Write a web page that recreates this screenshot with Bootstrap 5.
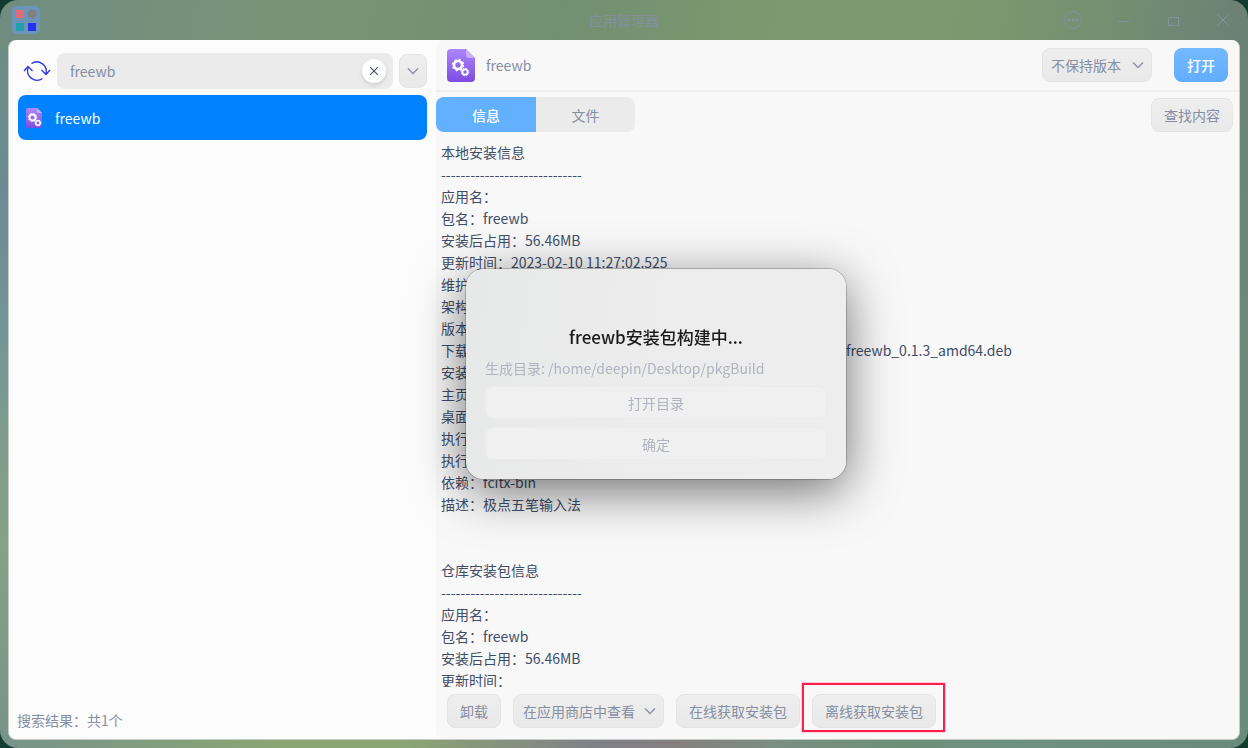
<!DOCTYPE html>
<html lang="zh-CN">
<head>
<meta charset="utf-8">
<meta name="viewport" content="width=device-width, initial-scale=1">
<title>应用管理器</title>
<link href="https://cdn.jsdelivr.net/npm/bootstrap@5.3.0/dist/css/bootstrap.min.css" rel="stylesheet">
<style>
  body { font-family: "Noto Sans CJK SC", sans-serif; font-size: 14px; line-height: 22px; color: #414d68; background: #123c30; }
  .app-window { border-radius: 18px; padding: 0 8px 8px;
    background:
      linear-gradient(100deg, #6f8c80 0%, #77927a 17%, #789373 28%, #718f72 45%, #7b9a6e 62%, #7c9a6f 76%, #748f71 88%, #6b8075 100%) top / 100% 50px no-repeat,
      linear-gradient(90deg, #77938a 0%, #8ba672 23%, #8ba672 32%, #808088 48%, #857f80 54%, #7a8f80 62%, #6d8f78 72%, #6e9080 82%, #6a8a7e 100%) bottom / 100% 16px no-repeat,
      linear-gradient(180deg, #6f8c80 0%, #6b8b94 25%, #72929a 40%, #839f88 66%, #84a284 73%, #77938a 100%) left / 20px 100% no-repeat,
      linear-gradient(180deg, #6b8075 0%, #6c8a79 50%, #6a8a7e 100%) right / 20px 100% no-repeat; }
  .title-bar { height: 40px; color: #878e9f; }
  .title-side { width: 180px; }
  .win-btn { background: none; border: 0; padding: 0; width: 26px; height: 26px; color: #8590a0; line-height: 0; }
  .panes { border-radius: 8px; background: #fcfcfc; border: 1px solid #c3cdc6; border-top: 0; overflow: hidden; }
  .list-pane { width: 427px; padding: 13px 9px 8px 8px; }
  .detail-pane { background: #f8f8f8; border-radius: 8px; }
  .soft { color: #868ea2; }
  .refresh-btn { width: 40px; height: 36px; background: none; border: 0; padding: 0; line-height: 0; }
  .search-box { height: 36px; border-radius: 8px; background: #ebebeb; padding-right: 7px; margin-right: 6px; }
  .search-box input { background: none; border: 0; outline: 0; color: #868ea2; padding: 0 13px; min-width: 0; }
  .clear-btn { width: 24px; height: 24px; border: 0; border-radius: 50%; background: #fff; padding: 0; line-height: 0; box-shadow: 0 2px 4px rgba(0,0,0,.12); }
  .tool-btn { height: 34px; padding: 0 12px; border-radius: 8px; border: 1px solid #e4e4e4; background: linear-gradient(#eeeeee, #e9e9e9); color: #868ea2; font: inherit; white-space: nowrap; }
  .drop-btn { width: 28px; padding: 0; line-height: 0; }
  .result-item { height: 45px; border-radius: 8px; background: #0081ff; color: #fff; text-decoration: none; padding: 0 8px; margin: 6px 0 0 1px; gap: 13px; }
  .detail-head { height: 52px; border-bottom: 2px solid #efefef; padding: 0 11px; }
  .app-name { margin-left: 11px; }
  .open-btn { width: 54px; height: 34px; border: 0; border-radius: 8px; color: #fff; background: linear-gradient(#73b9ff, #61adff); font: inherit; font-weight: 500; margin-left: 22px; }
  .version-field, .store-field { position: relative; }
  .tool-select { appearance: none; padding: 0 26px 0 9px; }
  .version-field select { width: 110px; padding-left: 8px; }
  .store-field select { width: 151px; }
  .version-field svg, .store-field svg { position: absolute; right: 8px; top: 13px; pointer-events: none; }
  .tab-row { padding: 5px 6px 7px 0; }
  .seg { border-radius: 8px; overflow: hidden; background: #ebebeb; }
  .seg button { width: 99px; height: 35px; border: 0; background: none; color: #868ea2; font: inherit; }
  .seg button.on { background: #63b0ff; color: #fff; font-weight: 500; width: 100px; }
  .info-text { height: 548px; overflow: hidden; padding: 2px 5px 0; white-space: pre; }
  .file-tail { margin-left: 377px; }
  .action-bar { padding: 6px 11px 11px; gap: 12px; }
  .marked { position: relative; }
  .marked::after { content: ""; position: absolute; inset: -12px -10px -5px -11px; border: 2px solid #ff1d4d; box-shadow: 0 0 1px #ff1d4d; pointer-events: none; }
  .build-layer { position: fixed; inset: 0 0 0 64px; pointer-events: none; }
  .build-dialog { width: 380px; border-radius: 18px; padding: 56px 19px 19px 19px; pointer-events: auto; color: #1a1a1a;
    background: linear-gradient(100deg, #e7e8e8, #ececec 45%, #eeeeee); box-shadow: 0 0 0 1px rgba(0,0,0,.2), 0 12px 50px rgba(0,0,0,.55); }
  .build-dialog h1 { font-size: 17px; line-height: 24px; font-weight: 500; margin-bottom: 8px; }
  .build-dialog button { height: 33px; border-radius: 8px; border: 1px solid #ececec; background: #f0f0f0; color: #b0b4c0; font: inherit; }
  .build-path { color: #b0b4c0; margin-bottom: 7px; }
</style>
</head>
<body>
<svg width="0" height="0" class="position-absolute" aria-hidden="true">
  <defs>
    <linearGradient id="violet" x2="0" y2="1"><stop stop-color="#ad88fb"/><stop offset="1" stop-color="#7d4be0"/></linearGradient>
    <symbol id="pkg" viewBox="0 0 28 33">
      <path d="M4 0H19L28 9V29a4 4 0 0 1-4 4H4a4 4 0 0 1-4-4V4a4 4 0 0 1 4-4z" fill="url(#violet)"/>
      <path d="M19 0l9 9h-6a3 3 0 0 1-3-3z" fill="#c9affc"/>
      <g fill="none" stroke="#fff">
        <circle cx="11" cy="16" r="4" stroke-width="2.6"/><circle cx="11" cy="16" r="5.6" stroke-width="1.2" stroke-dasharray="2.2 2.2"/>
        <circle cx="18" cy="23" r="2.6" stroke-width="1.8"/><circle cx="18" cy="23" r="3.8" stroke-width="1" stroke-dasharray="1.5 1.5"/>
      </g>
    </symbol>
    <symbol id="pkg-small" viewBox="0 0 16 20">
      <path d="M2 0H11L16 5V18a2 2 0 0 1-2 2H2a2 2 0 0 1-2-2V2a2 2 0 0 1 2-2z" fill="url(#violet)"/>
      <path d="M11 0l5 5h-4a1 1 0 0 1-1-1z" fill="#c9affc"/>
      <g fill="none" stroke="#fff">
        <circle cx="6.500" cy="9.500" r="3" stroke-width="1.800"/><circle cx="6.500" cy="9.500" r="4.200" stroke-width="1" stroke-dasharray="1.600 1.700"/>
        <circle cx="12" cy="15" r="2.200" stroke-width="1.500"/><circle cx="12" cy="15" r="3" stroke-width=".8" stroke-dasharray="1.200 1.200"/>
      </g>
    </symbol>
    <symbol id="chev" viewBox="0 0 12 8"><path d="M1 1.500l5 5 5-5" fill="none" stroke="#8d94a5" stroke-width="1.500"/></symbol>
  </defs>
</svg>
<div class="app-window d-flex flex-column min-vh-100">
  <header class="title-bar d-flex align-items-center justify-content-between">
    <div class="title-side ps-1">
      <svg width="28" height="28" viewBox="0 0 28 28" aria-hidden="true">
        <rect width="28" height="28" rx="5" fill="#6c94b9"/>
        <rect x="4" y="4" width="8" height="8" fill="#dd6e77"/><rect x="4" y="17" width="8" height="8" fill="#1fa0aa"/><rect x="16" y="17" width="8" height="8" fill="#2430ee"/>
        <circle cx="20" cy="8" r="4" fill="#808080"/><circle cx="20" cy="8" r="4.300" fill="none" stroke="#808080" stroke-width="1.400" stroke-dasharray="2.200 2.300"/>
      </svg>
    </div>
    <div>应用管理器</div>
    <div class="title-side d-flex justify-content-end gap-4 pe-1">
      <button class="win-btn flex-shrink-0" aria-label="菜单"><svg width="20" height="20" viewBox="0 0 20 20"><circle cx="10" cy="10" r="8.500" fill="none" stroke="currentColor"/><g fill="currentColor"><circle cx="6" cy="10" r="1.500"/><circle cx="10" cy="10" r="1.500"/><circle cx="14" cy="10" r="1.500"/></g></svg></button>
      <button class="win-btn flex-shrink-0" aria-label="最小化"><svg width="12" height="12" viewBox="0 0 12 12"><path d="M1 7.500h11" stroke="currentColor"/></svg></button>
      <button class="win-btn flex-shrink-0" aria-label="最大化"><svg width="12" height="12" viewBox="0 0 12 12"><path d="M1.500 3.500h10v8h-10z" fill="none" stroke="currentColor"/></svg></button>
      <button class="win-btn flex-shrink-0" aria-label="关闭"><svg width="12" height="12" viewBox="0 0 12 12"><path d="M.5.5l11 11m0-11l-11 11" stroke="currentColor"/></svg></button>
    </div>
  </header>
  <main class="panes d-flex flex-grow-1">
    <aside class="list-pane d-flex flex-column flex-shrink-0">
      <div class="d-flex align-items-center">
        <button class="refresh-btn" aria-label="刷新"><svg width="28" height="22" viewBox="0 0 28 22" fill="none" stroke="#2a35dd" stroke-width="1.300"><path d="M8.500 3.500A9.500 9.500 0 0 1 23 13.500M18.500 10l4.500 4.500 4-4.500M19.500 18.500A9.500 9.500 0 0 1 5 8M1 11l4-4.500L9.500 11"/></svg></button>
        <div class="search-box d-flex align-items-center flex-grow-1">
          <input type="text" class="flex-grow-1" value="freewb" aria-label="搜索">
          <button class="clear-btn" aria-label="清除"><svg width="8" height="8" viewBox="0 0 8 8"><path d="M0 0l8 8m0-8L0 8" stroke="#4b5670" stroke-width="1.200"/></svg></button>
        </div>
        <button class="tool-btn drop-btn" aria-label="更多"><svg width="12" height="8"><use href="#chev"/></svg></button>
      </div>
      <a href="#" class="result-item d-flex align-items-center"><svg width="16" height="20"><use href="#pkg-small"/></svg>freewb</a>
      <div class="mt-auto soft">搜索结果：共1个</div>
    </aside>
    <section class="detail-pane flex-grow-1 d-flex flex-column">
      <div class="detail-head d-flex align-items-center">
        <svg width="28" height="33"><use href="#pkg"/></svg>
        <span class="soft app-name">freewb</span>
        <div class="version-field ms-auto">
          <select class="tool-btn tool-select" aria-label="版本"><option>不保持版本</option></select>
          <svg width="12" height="8"><use href="#chev"/></svg>
        </div>
        <button class="open-btn">打开</button>
      </div>
      <div class="tab-row d-flex align-items-center justify-content-between">
        <div class="seg d-flex"><button class="on">信息</button><button>文件</button></div>
        <button class="tool-btn">查找内容</button>
      </div>
      <div class="info-text">本地安装信息
-----------------------------
应用名：
包名：freewb
安装后占用：56.46MB
更新时间：2023-02-10 11:27:02.525
维护
架构
版本
下载<span class="file-tail">freewb_0.1.3_amd64.deb</span>
安装
主页
桌面
执行
执行
依赖：fcitx-bin
描述：极点五笔输入法


仓库安装包信息
-----------------------------
应用名：
包名：freewb
安装后占用：56.46MB
更新时间：</div>
      <div class="action-bar d-flex mt-auto">
        <button class="tool-btn">卸载</button>
        <div class="store-field">
          <select class="tool-btn tool-select" aria-label="查看位置"><option>在应用商店中查看</option></select>
          <svg width="12" height="8"><use href="#chev"/></svg>
        </div>
        <button class="tool-btn">在线获取安装包</button>
        <button class="tool-btn marked">离线获取安装包</button>
      </div>
    </section>
  </main>
</div>
<div class="build-layer d-flex align-items-center justify-content-center">
  <div class="build-dialog d-flex flex-column" role="dialog" aria-labelledby="build-title">
    <h1 id="build-title" class="text-center">freewb安装包构建中...</h1>
    <div class="build-path">生成目录: /home/deepin/Desktop/pkgBuild</div>
    <button class="mb-2" disabled>打开目录</button>
    <button disabled>确定</button>
  </div>
</div>
<script src="https://cdn.jsdelivr.net/npm/bootstrap@5.3.0/dist/js/bootstrap.bundle.min.js"></script>
</body>
</html>
